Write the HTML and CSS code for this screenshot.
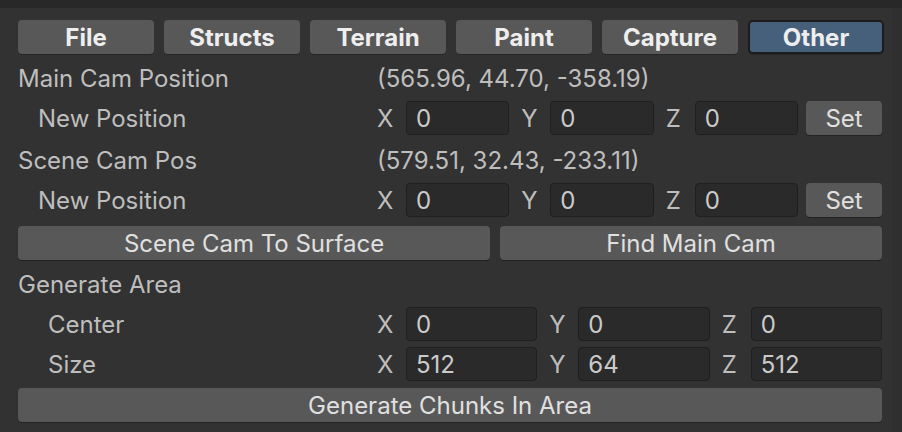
FILE: index.html
```html
<!DOCTYPE html>
<html>
<head>
<meta charset="utf-8">
<link rel="stylesheet" href="styles.css">
</head>
<body>
<div class="topstrip"></div>
<div class="panel">
  <div class="content">
    <div class="tabs">
      <div class="tab">File</div>
      <div class="tab">Structs</div>
      <div class="tab">Terrain</div>
      <div class="tab">Paint</div>
      <div class="tab">Capture</div>
      <div class="tab active">Other</div>
    </div>

    <div class="row plus1">
      <div class="label">Main Cam Position</div>
      <div class="value">(565.96, 44.70, -358.19)</div>
    </div>
    <div class="row">
      <div class="label indent1">New Position</div>
      <div class="vec vec-set">
        <div class="cell"><span class="axis">X</span><div class="field">0</div></div>
        <div class="cell"><span class="axis">Y</span><div class="field">0</div></div>
        <div class="cell"><span class="axis">Z</span><div class="field">0</div></div>
      </div>
      <div class="btn setbtn">Set</div>
    </div>

    <div class="row plus2">
      <div class="label">Scene Cam Pos</div>
      <div class="value">(579.51, 32.43, -233.11)</div>
    </div>
    <div class="row">
      <div class="label indent1">New Position</div>
      <div class="vec vec-set">
        <div class="cell"><span class="axis">X</span><div class="field">0</div></div>
        <div class="cell"><span class="axis">Y</span><div class="field">0</div></div>
        <div class="cell"><span class="axis">Z</span><div class="field">0</div></div>
      </div>
      <div class="btn setbtn">Set</div>
    </div>

    <div class="row plus3 two-btns">
      <div class="btn">Scene Cam To Surface</div>
      <div class="btn">Find Main Cam</div>
    </div>

    <div class="row plus1">
      <div class="label">Generate Area</div>
    </div>
    <div class="row">
      <div class="label indent2">Center</div>
      <div class="vec">
        <div class="cell"><span class="axis">X</span><div class="field">0</div></div>
        <div class="cell"><span class="axis">Y</span><div class="field">0</div></div>
        <div class="cell"><span class="axis">Z</span><div class="field">0</div></div>
      </div>
    </div>
    <div class="row">
      <div class="label indent2">Size</div>
      <div class="vec">
        <div class="cell"><span class="axis">X</span><div class="field">512</div></div>
        <div class="cell"><span class="axis">Y</span><div class="field">64</div></div>
        <div class="cell"><span class="axis">Z</span><div class="field">512</div></div>
      </div>
    </div>
    <div class="row plus1">
      <div class="btn wide">Generate Chunks In Area</div>
    </div>
  </div>
  <div class="rightstrip"></div>
</div>
</body>
</html>
```

FILE: styles.css
```css
html, body {
  margin: 0;
  padding: 0;
  background: #323232;
  font-family: Inter, "Noto Sans", "Liberation Sans", sans-serif;
  font-size: 24px;
  color: #bebebe;
  width: 902px;
  height: 432px;
  overflow: hidden;
}

.topstrip {
  height: 8px;
  background: #282828;
}

.panel {
  display: flex;
  height: 424px;
}

.content {
  width: 864px;
  padding-left: 18px;
  display: flex;
  flex-direction: column;
  gap: 6px;
}

.rightstrip {
  margin-left: auto;
  width: 10px;
  background: #2f2f2f;
}

.tabs {
  margin-top: 12px;
  margin-right: -2px;
  display: grid;
  grid-template-columns: repeat(6, 1fr);
  gap: 10px;
  height: 34px;
}

.tab {
  background: #585858;
  border-radius: 4px;
  box-shadow: 0 1px 0 #262626;
  color: #eeeeee;
  font-weight: 700;
  display: flex;
  align-items: center;
  justify-content: center;
}

.tab.active {
  background: #46607c;
  border: 2px solid #1c1c1c;
  box-sizing: border-box;
  border-radius: 5px;
}

.row {
  height: 34px;
  display: flex;
  align-items: center;
}

.plus1 { margin-top: 1px; }
.plus2 { margin-top: 2px; }
.plus3 { margin-top: 3px; }

.label {
  width: 359px;
  flex: none;
  white-space: nowrap;
}

.indent1 { padding-left: 20px; box-sizing: border-box; }
.indent2 { padding-left: 30px; box-sizing: border-box; }

.value {
  white-space: nowrap;
}

.vec {
  flex: 1;
  display: grid;
  grid-template-columns: 1fr 1fr 1fr;
  gap: 12px;
  height: 34px;
}

.cell {
  display: flex;
  align-items: center;
}

.axis {
  width: 29px;
  flex: none;
}

.field {
  flex: 1;
  height: 34px;
  box-sizing: border-box;
  background: #2a2a2a;
  border: 1px solid #1f1f1f;
  border-radius: 4px;
  padding-left: 9px;
  display: flex;
  align-items: center;
  color: #cacaca;
}

.btn {
  background: #585858;
  border-radius: 4px;
  box-shadow: 0 1px 0 #232323;
  color: #e0e0e0;
  height: 34px;
  display: flex;
  align-items: center;
  justify-content: center;
  white-space: nowrap;
}

.setbtn {
  width: 76px;
  margin-left: 8px;
  flex: none;
}

.two-btns {
  display: grid;
  grid-template-columns: 472px 1fr;
  gap: 10px;
}

.wide {
  flex: 1;
}
```
